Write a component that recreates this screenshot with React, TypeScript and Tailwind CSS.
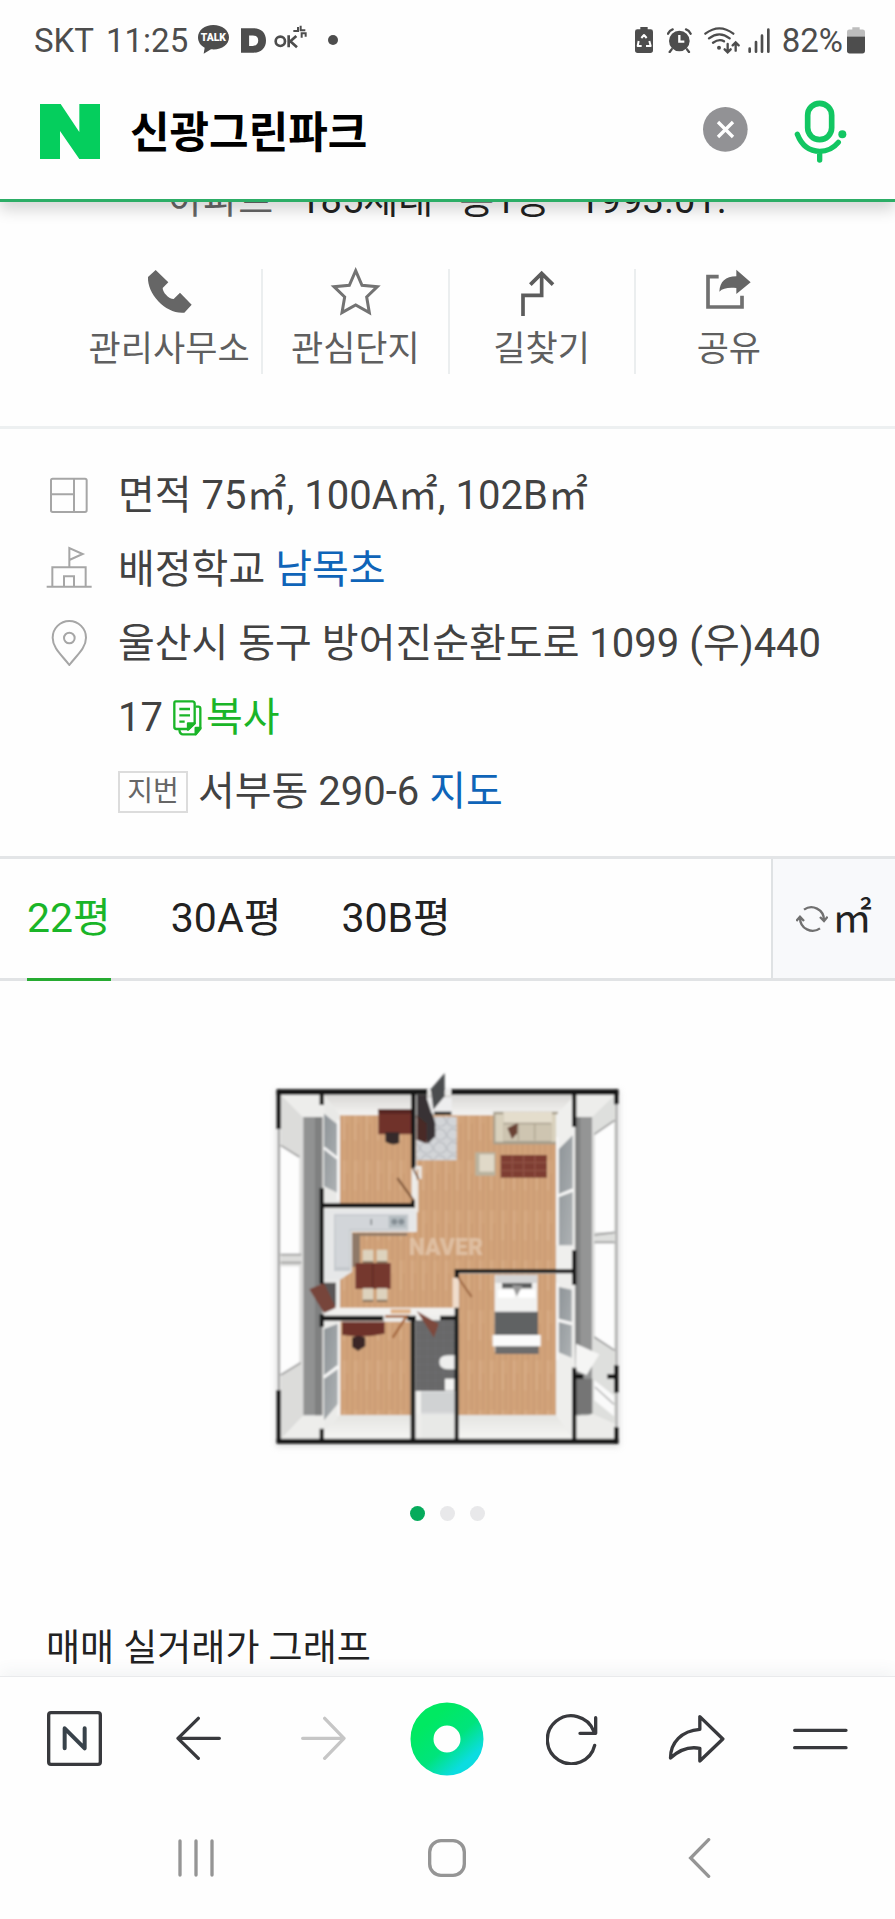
import React from "react";

const FONT = "font-[Roboto,'Noto_Sans_CJK_KR',sans-serif]";

function StatusBar() {
  return (
    <div className="flex h-20 items-center justify-between pr-[30px] pl-[34px] text-[33px] leading-none text-[#4d4d4d]">
      <div className="flex items-center">
        <span>SKT</span>
        <span className="ml-3">11:25</span>
        <svg className="ml-[10px]" width="31" height="30" viewBox="0 0 93 90" role="img" aria-label="카카오톡">
          <path d="M46 0C20 0 0 16 0 37c0 14 8 25 20 31l-3 18 22-13c30 3 54-12 54-36C93 16 72 0 46 0z" fill="#4d4d4d" />
          <text x="46" y="49" textAnchor="middle" fontSize="31" fontWeight="900" fill="#fff">TALK</text>
        </svg>
        <svg className="ml-3" width="25" height="25" viewBox="0 0 74 74" aria-hidden="true">
          <path d="M0 1h38c22 0 36 14 36 36S60 73 38 73H0zM24 22v31h11c10 0 16-6 16-16s-6-15-16-15z" fill="#4d4d4d" fillRule="evenodd" />
        </svg>
        <svg className="ml-2" width="34" height="30" viewBox="0 0 102 90" aria-hidden="true">
          <g fill="none" stroke="#4d4d4d">
            <circle cx="19" cy="49" r="14" strokeWidth="8" />
            <path d="M44 31v36M67 33 49 49l20 18" strokeWidth="8" />
            <path d="M62 4v0M58 18h14V6M80 2v14h14M83 38V25h12v10" strokeWidth="6" />
          </g>
        </svg>
        <span className="ml-5 size-[10px] rounded-full bg-[#4d4d4d]" />
      </div>
      <div className="flex items-center">
        <svg width="18" height="26" viewBox="0 0 54 78" aria-hidden="true">
          <path d="M16 0h22v7h9q7 0 7 7v56q0 8-8 8H8q-8 0-8-8V14q0-7 7-7h9z" fill="#4d4d4d" />
          <path d="M19 33l8-9 8 9M11 42l-3 15h12M43 42l4 15H33" fill="none" stroke="#fff" strokeWidth="6" strokeLinejoin="round" />
        </svg>
        <svg className="ml-[14px]" width="25" height="25" viewBox="0 0 75 75" aria-hidden="true">
          <circle cx="37" cy="39" r="31" fill="#4d4d4d" />
          <path d="M3 17Q8 7 17 4M71 17Q66 7 57 4M14 64l-6 8M60 64l6 8" stroke="#4d4d4d" strokeWidth="7" fill="none" strokeLinecap="round" />
          <path d="M37 21v20h15" stroke="#fff" strokeWidth="7" fill="none" />
        </svg>
        <svg className="ml-3" width="36" height="27" viewBox="0 0 108 81" aria-hidden="true">
          <g fill="none" stroke="#4d4d4d" strokeWidth="7" strokeLinecap="round">
            <path d="M4 20Q46-12 88 20M15 34Q46 10 77 34M27 47Q46 34 60 43" />
            <path d="M71 51v24M62 67l9 9 9-9M95 71V47M86 55l9-9 9 9" />
          </g>
          <circle cx="45" cy="62" r="6" fill="#4d4d4d" />
        </svg>
        <svg className="ml-2" width="22" height="25" viewBox="0 0 66 75" aria-hidden="true">
          <path d="M5 62v9M24 42v29M42 23v48M61 5v66" stroke="#4d4d4d" strokeWidth="8" strokeLinecap="round" />
        </svg>
        <span className="ml-3">82%</span>
        <svg className="ml-1" width="18" height="27" viewBox="0 0 54 80" aria-hidden="true">
          <path d="M16 0h22v7h9q7 0 7 7v14H0V14q0-7 7-7h9z" fill="#bdbdbd" />
          <path d="M0 28h54v43q0 8-8 8H8q-8 0-8-8z" fill="#4d4d4d" />
        </svg>
      </div>
    </div>
  );
}

function SearchBar() {
  return (
    <form className="flex h-[119px] items-center pr-12 pb-4 pl-10" onSubmit={(e) => e.preventDefault()}>
      <a href="#home" aria-label="네이버 홈">
        <svg width="60" height="55" viewBox="0 0 180 165" aria-hidden="true">
          <path d="M0 0h62l56 84V0h62v165h-62L60 81v84H0z" fill="#05ce5d" />
        </svg>
      </a>
      <input
        aria-label="검색어"
        defaultValue="신광그린파크"
        className="ml-[30px] min-w-0 flex-1 bg-transparent pt-[2px] text-[43px] leading-[60px] font-bold text-black outline-none"
      />
      <button type="button" aria-label="지우기" className="mb-1">
        <svg width="45" height="45" viewBox="0 0 135 135" aria-hidden="true">
          <circle cx="67" cy="67" r="67" fill="#929295" />
          <path d="M45 45l45 45M90 45 45 90" stroke="#fff" strokeWidth="10" />
        </svg>
      </button>
      <button type="button" aria-label="음성 검색" className="ml-[46px]">
        <svg width="53" height="64" viewBox="0 0 159 192" aria-hidden="true">
          <g fill="none" stroke="#12c662" strokeWidth="17" strokeLinecap="round">
            <rect x="41" y="10" width="72" height="109" rx="36" />
            <path d="M10 103c14 36 40 51 67 51 22 0 42-10 56-27M77 156v24" strokeWidth="16" />
          </g>
          <circle cx="145" cy="103" r="12" fill="#12c662" />
        </svg>
      </button>
    </form>
  );
}

const actions = [
  {
    label: "관리사무소",
    icon: <path d="M26 3 64 40 47 57c0 13 18 33 33 33l19-19 35 36-22 24C60 137 0 77 3 24z" fill="#666" />,
  },
  {
    label: "관심단지",
    icon: <path d="M68 5 87 49l46 4-32 31 8 47-41-23-41 23 8-47L3 53l46-4z" fill="none" stroke="#737373" strokeWidth="9" />,
  },
  {
    label: "길찾기",
    icon: <path d="M12 141V79h56V14M34 47l34-34 34 34" fill="none" stroke="#5c5c5c" strokeWidth="11" />,
  },
  {
    label: "공유",
    icon: (
      <>
        <path d="M38 23H6v91h102V80" fill="none" stroke="#707070" strokeWidth="11" />
        <path d="M40 68C42 38 58 22 91 22V2l43 38-43 35V57C67 55 51 57 40 68z" fill="#666" />
      </>
    ),
  },
];

function Actions() {
  return (
    <ul className="mt-[41px] mr-[73px] ml-[77px] grid grid-cols-4 divide-x-2 divide-[#ebeeef]">
      {actions.map((a) => (
        <li key={a.label} className="flex h-[105px] justify-center">
          <button type="button" className="flex flex-col items-center whitespace-nowrap text-[#5f5f5f]">
            <svg className="overflow-visible" width="45" height="48" viewBox="0 0 135 144" aria-hidden="true">
              {a.icon}
            </svg>
            <span className="mt-[6px] text-[35px] leading-[54px]">{a.label}</span>
          </button>
        </li>
      ))}
    </ul>
  );
}

function InfoIcon({ children }: { children: React.ReactNode }) {
  return (
    <svg className="mt-[13px] shrink-0" width="46" height="46" viewBox="0 0 138 138" fill="none" stroke="#a6a6a6" strokeWidth="6" aria-hidden="true">
      {children}
    </svg>
  );
}

function Info() {
  return (
    <section className="mt-[52px] border-y-[3px] border-t-[#edf0f1] border-b-[#e3e5e7] pt-[30px] pr-16 pb-[27px] pl-[46px] text-[40px] leading-[74px] text-[#424242]">
      <div className="flex gap-[26px]">
        <InfoIcon>
          <rect x="15" y="20" width="107" height="100" rx="5" />
          <path d="M84 20v100M15 67h69" />
        </InfoIcon>
        <p>면적 75㎡, 100A㎡, 102B㎡</p>
      </div>
      <div className="flex gap-[26px]">
        <InfoIcon>
          <path d="M70 62V6l40 18-40 18M2 122h135M19 122V64h100v58M54 122V91h30v31" />
        </InfoIcon>
        <p>배정학교 <a href="#school" className="text-[#0f64b8]">남목초</a></p>
      </div>
      <div className="flex gap-[26px]">
        <InfoIcon>
          <path d="M70 135C47 105 20 84 20 53a50 50 0 0 1 100 0c0 31-27 52-50 82z" />
          <circle cx="70" cy="54" r="16" />
        </InfoIcon>
        <div className="min-w-0">
          <p className="break-all">
            <span>울산시 동구 방어진순환도로 1099 (우)44017</span>
            <button type="button" className="ml-[10px] text-[#1ab528]">
              <svg className="mr-1 inline-block align-[-5px]" width="29" height="36" viewBox="0 0 87 108" fill="none" stroke="#1ab528" strokeWidth="7" strokeLinejoin="round" aria-hidden="true">
                <path d="M8 4h50q7 0 7 7v58L47 87H10q-6 0-6-6V10q0-6 4-6z" />
                <path d="M68 20h8q6 0 6 6v60l-14 17H30q-9 0-11-13" />
                <path d="M45 89V70h20zM68 102V84h14z" fill="#1ab528" />
                <path d="M19 27h32M19 46h32M19 65h16" />
              </svg>
              복사
            </button>
          </p>
          <p className="flex items-center">
            <span className="flex h-[42px] w-[70px] items-center justify-center border-2 border-[#dcdcdc] text-[28px] leading-none text-[#666]">지번</span>
            <span className="ml-[10px]">서부동 290-6 <a href="#map" className="text-[#0f64b8]">지도</a></span>
          </p>
        </div>
      </div>
    </section>
  );
}

function SizeTabs() {
  return (
    <div className="flex h-[122px] border-b-[3px] border-[#e1e3e5] text-[41px] text-[#222]">
      <div role="tablist" className="flex flex-1 gap-[60px] pl-[27px]">
        <button role="tab" aria-selected="true" type="button" className="-mb-[3px] border-b-[3px] border-[#27ab32] text-[#1ab528]">22평</button>
        <button role="tab" aria-selected="false" type="button">30A평</button>
        <button role="tab" aria-selected="false" type="button">30B평</button>
      </div>
      <button type="button" aria-label="단위 전환 ㎡" className="flex w-[124px] items-center justify-center gap-1 border-l-2 border-[#dfe2e4] bg-[#f8f9fb] text-[40px]">
        <svg width="32" height="28" viewBox="0 0 96 84" fill="none" stroke="#707070" strokeWidth="7" aria-hidden="true">
          <path d="M24 14C48-3 84 12 84 46M72 36l12 12 11-13M72 70C48 87 12 72 12 38M1 48l11-13 12 13" />
        </svg>
        ㎡
      </button>
    </div>
  );
}

function FloorPlan() {
  return (
    <svg width="380" height="400" viewBox="-6 -4 1140 1200" role="img" aria-label="22평 평면도">
      <defs>
        <pattern id="wood" width="34" height="150" patternUnits="userSpaceOnUse">
          <rect width="34" height="150" fill="#d1a37a" />
          <path d="M5 0v150M23 40v110" stroke="#c7976d" strokeWidth="3" />
          <path d="M14 0v90" stroke="#d9ae87" strokeWidth="5" />
        </pattern>
        <pattern id="tile" width="24" height="24" patternUnits="userSpaceOnUse">
          <rect width="24" height="24" fill="#676869" />
          <path d="M0 0h24v24" fill="none" stroke="#747575" strokeWidth="2" />
        </pattern>
        <pattern id="marble" width="40" height="40" patternUnits="userSpaceOnUse">
          <rect width="40" height="40" fill="#d3d5d8" />
          <path d="M0 20 14 4l18 6 8 18-16 12L6 34z" fill="none" stroke="#b4b7bc" strokeWidth="3" />
        </pattern>
        <linearGradient id="wallTop" x2="0" y2="1">
          <stop offset="0" stopColor="#d9d8d6" />
          <stop offset="1" stopColor="#f4f3f1" />
        </linearGradient>
        <linearGradient id="wallBottom" x2="0" y2="1">
          <stop offset="0" stopColor="#e4e4e1" />
          <stop offset="1" stopColor="#f6f6f4" />
        </linearGradient>
        <linearGradient id="pane" x2="1" y2="1">
          <stop offset="0" stopColor="#8e9498" />
          <stop offset="1" stopColor="#aeb2b4" />
        </linearGradient>
        <filter id="soft" x="-5%" y="-5%" width="110%" height="110%">
          <feGaussianBlur stdDeviation="3" />
        </filter>
        <filter id="shade" x="-10%" y="-10%" width="120%" height="120%">
          <feGaussianBlur stdDeviation="9" />
        </filter>
      </defs>
      <rect x="48" y="90" width="1030" height="1068" fill="#bbb" opacity=".5" filter="url(#shade)" />
      <g filter="url(#soft)">
        <rect x="54" y="92" width="1018" height="1056" fill="#ededeb" />

        <path d="M63 104 130 172V1065L63 1135z" fill="#dcdcda" />
        <path d="M130 170h58v895h-58z" fill="#919292" />
        <path d="M165 170h20v895h-20z" fill="#7f8080" />
        <path d="M62 255 118 290V580H62zM62 618h56v290l-56 36z" fill="#fdfdfd" />
        <path d="M62 255 118 290M62 944l60-37M62 583h62M62 607h62" stroke="#9b9b9b" strokeWidth="5" />
        <path d="M57 200v795" stroke="#9d9d9d" strokeWidth="6" />

        <path d="M945 170h52v895h-52z" fill="#949595" />
        <path d="M945 170h16v895h-16z" fill="#808181" />
        <path d="M997 170 1064 104V1090L997 1065z" fill="#dedfdd" />
        <path d="M1005 222 1062 182V515h-57zM1005 548h57v320l-57-36z" fill="#fdfdfd" />
        <path d="M1003 222 1064 180M1003 524l61-8M1003 546h61M1003 830l61 40" stroke="#969696" strokeWidth="5" />
        <path d="M1069 125v980" stroke="#a5a5a5" strokeWidth="6" />

        <path d="M192 104H455V165H240z" fill="url(#wallTop)" />
        <path d="M240 165H455V430H240z" fill="url(#wood)" />
        <path d="M192 104 240 165V430H192z" fill="#e9e9e7" />
        <path d="M192 160 232 192V397L192 378z" fill="url(#pane)" />
        <path d="M192 262l40 32M235 180v240" stroke="#f7f7f7" strokeWidth="8" />
        <path d="M355 146h100v76H355z" fill="#6f332b" />
        <path d="M355 146h100v14H355z" fill="#572720" />
        <path d="M376 216h42v32q-20 10-42-4z" fill="#34292a" />
        <path d="M412 353 462 422" stroke="#865c3e" strokeWidth="7" />

        <path d="M470 104H945V165H470z" fill="url(#wallTop)" />
        <path d="M470 165H888V632H590V748H240V635h35V515H470z" fill="url(#wood)" />
        <path d="M470 170h120v130H470z" fill="url(#marble)" />
        <path d="M470 104h30l26 84v40l-22 22-34-78z" fill="#383334" />
        <path d="M500 112h75v46h-60z" fill="#ededee" />
        <path d="M470 165 500 190V250l-30-12z" fill="#4a2b27" />
        <path d="M512 87 554 38V108l-34 40z" fill="#4c4d50" />
        <path d="M700 154h194v98H700z" fill="#a79f8d" />
        <path d="M706 162h24v82h-24zM874 162h18v82h-18z" fill="#d9d1bd" />
        <path d="M730 155h146v32H730z" fill="#e4ddcc" />
        <path d="M730 192h144v50H730z" fill="#cec5b1" />
        <path d="M775 190v50M824 190v50" stroke="#afa590" strokeWidth="4" />
        <path d="M742 203 773 188 772 219 756 236z" fill="#6a4335" />
        <path d="M646 276h60v70h-60z" fill="#b9b29f" />
        <path d="M658 282h44v52h-44z" fill="#e0d9c8" />
        <path d="M722 284h139v68H722z" fill="#7e3d31" />
        <path d="M722 306h139M722 330h139M757 284v68M791 284v68M825 284v68" stroke="#925346" strokeWidth="4" />

        <path d="M888 165 945 104V632H888z" fill="#efefed" />
        <path d="M896 267 938 225V385L896 402zM896 410 938 395V555H896z" fill="url(#pane)" />
        <path d="M892 230v325M896 406l42-18" stroke="#f7f7f7" strokeWidth="7" />

        <path d="M192 447H470V512H275V635L238 660H192z" fill="#e6e7e8" />
        <path d="M222 462H445v50H272V632h-50z" fill="#c5c9cd" />
        <path d="M226 466h214v40H268V620h-40z" fill="#d2d5d9" />
        <path d="M386 467h53v36h-53z" fill="#b3bbc0" />
        <circle cx="403" cy="484" r="9" fill="#858e94" /><circle cx="424" cy="484" r="9" fill="#858e94" />
        <path d="M334 476v18" stroke="#6d7275" strokeWidth="4" />
        <path d="M276 518H442v8H300V620h-24z" fill="#8f7968" />
        <path d="M286 608h106v78H286z" fill="#75372e" />
        <path d="M338 608v78" stroke="#5d2922" strokeWidth="4" />
        <path d="M308 568h32v38h-32zM350 568h32v38h-32zM308 684h32v38h-32zM350 684h32v38h-32z" fill="#ddd2bd" />
        <path d="M308 602h32v7h-32zM350 602h32v7h-32zM308 718h32v7h-32zM350 718h32v7h-32z" fill="#8a735d" />
        <path d="M184 667h44v70h-44z" fill="#5a5757" />
        <path d="M148 687 192 668 228 742 192 758z" fill="#77453a" />
        <path d="M228 742H590V768H192z" fill="#f2f1ef" />
        <path d="M392 746h60v14h-60z" fill="#e0b48b" />

        <path d="M240 784H452V1065H240z" fill="url(#wood)" />
        <path d="M192 790 240 780V1065L192 1115z" fill="#ebebe9" />
        <path d="M192 806 234 790V920L192 945zM192 955 234 926V1030L192 1080z" fill="url(#pane)" />
        <path d="M237 785v280M192 950l42-32" stroke="#f7f7f7" strokeWidth="8" />
        <path d="M192 1115 240 1065H452V1136H192z" fill="url(#wallBottom)" />
        <path d="M246 784h128v36q-60 14-128 4z" fill="#6e332b" />
        <path d="M276 832q20-12 40 0v26l-22 14-18-12z" fill="#3a2728" />
        <path d="M375 768H440L398 832" fill="none" stroke="#a96d45" strokeWidth="8" />

        <path d="M467 780H585V992H467z" fill="url(#tile)" />
        <path d="M467 992H585V1136H467z" fill="#dcddde" />
        <path d="M483 996h100v60H483z" fill="#d0d2d3" />
        <path d="M467 992h16v144h-16z" fill="#f0f0ee" />
        <path d="M467 1062h118v74H467z" fill="#ecece9" opacity=".75" />
        <path d="M470 752 536 790 522 832z" fill="#7d4a3d" />
        <path d="M538 905q0-20 26-20h20v42h-20q-26 0-26-22z" fill="#eeeeed" />
        <path d="M555 955h28v36h-28z" fill="#f4f4f3" />

        <path d="M596 640H888V1065H596z" fill="url(#wood)" />
        <path d="M888 645H940V1130L888 1065z" fill="#eeeeec" />
        <path d="M896 680 935 688V785L896 775zM896 785 935 795V892L896 876z" fill="url(#pane)" />
        <path d="M892 668v230M896 780l40 10" stroke="#f7f7f7" strokeWidth="7" />
        <path d="M596 1065H888L940 1136H596z" fill="url(#wallBottom)" />
        <path d="M704 644h128v230H704z" fill="#f2f2f1" />
        <path d="M706 644h126v24H706z" fill="#d4d4d4" />
        <path d="M726 668h90v16h-90z" fill="#5a5b5c" />
        <path d="M714 688h50v24h-50zM776 688h50v24h-50z" fill="#fff" />
        <path d="M756 674l14 34 18-32z" fill="#999" />
        <path d="M704 754h130v72H704z" fill="#606264" />
        <path d="M698 824h144v34H698z" fill="#fbfbfb" />
        <path d="M706 858h130v23H706z" fill="#6d6c6c" />
        <path d="M592 648 635 710" stroke="#a36e49" strokeWidth="7" />
        <path d="M578 652h15v92h-15z" fill="#f1ddcb" />

        <path d="M948 850 1018 882 980 944 946 930z" fill="#f5f5f4" />
        <path d="M950 955h47v105h-47z" fill="#747574" />
        <path d="M1003 960 1062 1006V1068L1003 1020z" fill="#fafafa" />
        <path d="M1005 980 1062 1032" stroke="#b4b4b4" strokeWidth="5" />
        <path d="M945 1080 997 1060 1064 1090V1135H945z" fill="#ececea" />

        <g fill="#141414">
          <path d="M50 87h452v16H50zM574 87h501v16H574zM50 1135h1025v15H50z" />
          <path d="M50 88h13v118H50zM50 990h13v158H50zM1062 88h13v44h-13zM1062 915h13v82h-13zM1062 1100h13v50h-13z" />
          <path d="M179 90h13v44h-13zM179 383h13v287h-13zM179 762h13v38h-13zM179 1105h13v40h-13z" />
          <path d="M453 92h14v232h-14zM188 428h279v14H188zM453 420h14v22h-14z" />
          <path d="M188 766h182v15H188zM442 766h26v15h-26zM452 770h14v370h-14zM540 766h52v14h-52zM584 742h12v398h-12z" />
          <path d="M584 626h360v13H584zM584 626h13v26h-13z" />
          <path d="M936 90h13v110h-13zM936 570h13v104h-13zM936 922h13v220h-13zM942 941h28v14h-28zM1042 941h26v14h-26z" />
          <path d="M522 154h52v10h-52z" />
        </g>
        <path d="M466 322h14v34M470 360v96" stroke="#ece9e5" strokeWidth="10" fill="none" />
        <path d="M459 324 476 356" stroke="#714c35" strokeWidth="5" />
        <text x="446" y="584" fontSize="69" fontWeight="900" fill="#efdcca" opacity=".5">NAVER</text>
      </g>
    </svg>
  );
}

function BottomBar() {
  const stroke = { fill: "none", stroke: "#38393d", strokeWidth: 10, strokeLinecap: "round", strokeLinejoin: "round" } as const;
  return (
    <nav aria-label="브라우저 도구" className="grid h-[123px] grid-cols-7 px-3">
      <button type="button" aria-label="네이버" className="flex items-center justify-center">
        <svg width="55" height="55" viewBox="0 0 165 165" {...stroke}>
          <rect x="5" y="5" width="155" height="155" rx="7" />
          <path d="M53 112V52l60 60V52" stroke="#38424a" strokeWidth="12" />
        </svg>
      </button>
      <button type="button" aria-label="뒤로" className="flex items-center justify-center">
        <svg width="45" height="45" viewBox="0 0 135 135" {...stroke}>
          <path d="M130 67H6M67 7 6 67l61 60" />
        </svg>
      </button>
      <button type="button" aria-label="앞으로" className="flex items-center justify-center">
        <svg width="45" height="45" viewBox="0 0 135 135" {...stroke} stroke="#c6c6c6">
          <path d="M5 67h124M71 7l58 60-58 60" />
        </svg>
      </button>
      <button type="button" aria-label="그린닷" className="flex items-center justify-center">
        <svg width="74" height="74" viewBox="0 0 74 74">
          <defs>
            <linearGradient id="dot" x1="20%" y1="10%" x2="92%" y2="92%">
              <stop offset="0" stopColor="#00e962" />
              <stop offset=".55" stopColor="#00e47c" />
              <stop offset="1" stopColor="#0bdce0" />
            </linearGradient>
          </defs>
          <circle cx="37" cy="37" r="25" fill="none" stroke="url(#dot)" strokeWidth="23" />
        </svg>
      </button>
      <button type="button" aria-label="새로고침" className="flex items-center justify-center">
        <svg width="52" height="52" viewBox="0 0 156 156" {...stroke}>
          <path d="M146 97A72 72 0 1 1 143 54M149 14v47h-47" />
        </svg>
      </button>
      <button type="button" aria-label="공유하기" className="flex items-center justify-center">
        <svg width="57" height="50" viewBox="0 0 170 150" {...stroke}>
          <path d="M95 8v38C40 50 7 86 7 132c26-24 57-35 88-29v38l69-66z" />
        </svg>
      </button>
      <button type="button" aria-label="메뉴" className="flex items-center justify-center">
        <svg width="55" height="22" viewBox="0 0 165 66" {...stroke}>
          <path d="M5 7h154M5 59h154" />
        </svg>
      </button>
    </nav>
  );
}

function SystemBar() {
  const stroke = { fill: "none", stroke: "#959595", strokeWidth: 10, strokeLinecap: "round" } as const;
  return (
    <nav aria-label="시스템" className="grid h-[119px] grid-cols-3 px-[70px] pb-1">
      <button type="button" aria-label="최근 앱" className="flex items-center justify-center">
        <svg width="36" height="38" viewBox="0 0 108 114" {...stroke}>
          <path d="M6 6v102M54 6v102M102 6v102" />
        </svg>
      </button>
      <button type="button" aria-label="홈" className="flex items-center justify-center">
        <svg width="38" height="38" viewBox="0 0 114 114" {...stroke}>
          <rect x="5" y="5" width="104" height="104" rx="34" />
        </svg>
      </button>
      <button type="button" aria-label="이전" className="flex items-center justify-center">
        <svg width="23" height="40" viewBox="0 0 69 120" {...stroke}>
          <path d="M62 5 8 60l54 55" />
        </svg>
      </button>
    </nav>
  );
}

export default function App() {
  return (
    <div className={`flex min-h-screen flex-col bg-[#fefefe] ${FONT}`}>
      <header className="sticky top-0 z-10 border-b-[3px] border-[#2cad66] bg-[#fefefe] shadow-[0_8px_14px_rgba(0,0,0,0.16)]">
        <StatusBar />
        <SearchBar />
      </header>

      <main className="flex flex-1 flex-col">
        <p className="-mt-[30px] flex h-14 items-center justify-center text-[38px] leading-none text-[#222]">
          <span className="text-[#666]">아파트</span>
          <span className="mx-[11px] size-1 rounded-full bg-[#ccc]" />
          185세대
          <span className="mx-[11px] size-1 rounded-full bg-[#ccc]" />
          총1동
          <span className="mx-3 size-1 rounded-full bg-[#ccc]" />
          1993.01.
        </p>
        <Actions />
        <Info />
        <SizeTabs />
        <div className="flex flex-col items-center pt-[78px]">
          <FloorPlan />
          <div className="mt-[47px] flex gap-[15px]">
            <button type="button" aria-label="1번 이미지" className="size-[15px] rounded-full bg-[#06ab5c]" />
            <button type="button" aria-label="2번 이미지" className="size-[15px] rounded-full bg-[#e8e8ea]" />
            <button type="button" aria-label="3번 이미지" className="size-[15px] rounded-full bg-[#e8e8ea]" />
          </div>
        </div>
        <h2 className="mt-[101px] pl-[46px] text-[37px] leading-[54px] text-[#222]">매매 실거래가 그래프</h2>
      </main>

      <footer className="sticky bottom-0 z-10 border-t border-[#e9eaec] bg-[#fefefe] shadow-[0_-6px_14px_rgba(60,80,110,0.06)]">
        <BottomBar />
        <SystemBar />
      </footer>
    </div>
  );
}
